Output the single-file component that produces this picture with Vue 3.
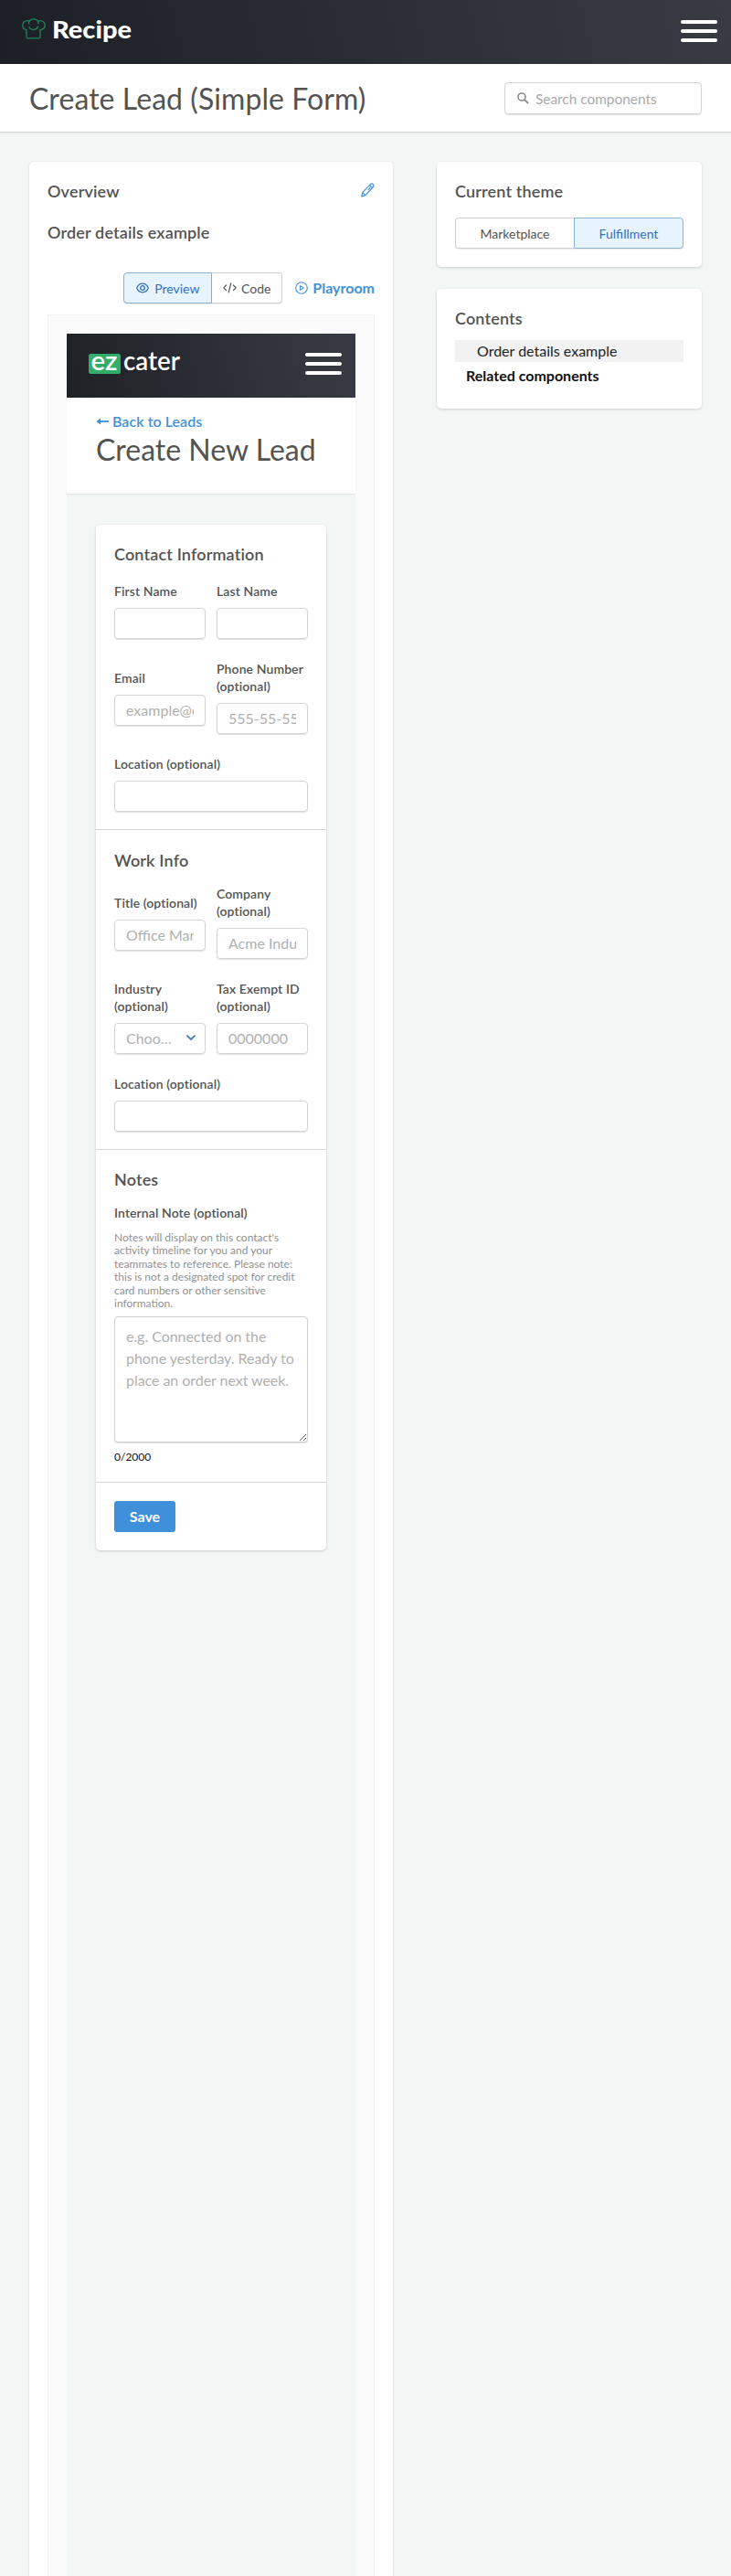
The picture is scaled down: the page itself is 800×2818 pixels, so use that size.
<script setup>
const contact = [
  { label: 'First Name' },
  { label: 'Last Name' },
  { label: 'Email', placeholder: 'example@ezcater.com' },
  { label: 'Phone Number (optional)', placeholder: '555-55-5555' },
  { label: 'Location (optional)', wide: true },
]
const work = [
  { label: 'Title (optional)', placeholder: 'Office Manager' },
  { label: 'Company (optional)', placeholder: 'Acme Industries' },
  { label: 'Industry (optional)', select: 'Choose one' },
  { label: 'Tax Exempt ID (optional)', placeholder: '0000000' },
  { label: 'Location (optional)', wide: true },
]
const groups = [
  { title: 'Contact Information', cls: 'contact', fields: contact },
  { title: 'Work Info', cls: 'work', fields: work },
]
</script>

<template>
  <div class="page">
    <header class="topbar">
      <div class="brand">
        <svg class="hat" width="26" height="23" viewBox="0 0 26 23" fill="none" stroke="#23835c" stroke-width="1.3" stroke-linecap="round" stroke-linejoin="round">
          <path d="M5 13.2V20.6Q5 21.8 6.2 21.8H18.8Q20 21.8 20 20.6V13.2" />
          <path d="M5 12.6C2.5 12.2.8 10.2.8 7.5C.8 4.6 3 2.6 5.7 2.6C6.6 2.6 7.4 2.8 8.1 3.2C9 1.6 10.6.8 12.8.8C15 .8 16.7 1.7 17.6 3.2C18.3 2.8 19.1 2.6 20 2.6C22.8 2.6 25.1 4.6 25.1 7.5C25.1 10.2 22.9 12.3 20 12.6" />
          <path d="M8.1 3.2Q7.5 4.2 7.5 5.8M17.6 3.2Q18.3 4.5 18 5.8M8 9.5Q9 12 10.7 11.9Q12.2 13 13.8 12Q17 11.8 17.6 8.8" />
        </svg>
        <svg class="word" width="92" height="34"><text x="0" y="25" textLength="87" lengthAdjust="spacingAndGlyphs">Recipe</text></svg>
      </div>
      <div class="burger"><i /><i /><i /></div>
    </header>

    <div class="titlebar">
      <h1>Create Lead (Simple Form)</h1>
      <div class="search">
        <svg width="13" height="13" viewBox="0 0 13 13" fill="none" stroke="#8b8b8b" stroke-width="1.6"><circle cx="5" cy="5" r="4" /><path d="M8 8l4 4" stroke-width="2" /></svg>
        <span>Search components</span>
      </div>
    </div>

    <main class="columns">
      <section class="card main">
        <div class="row">
          <h2>Overview</h2>
          <svg class="pencil" width="15" height="16" viewBox="0 0 15 16" fill="none" stroke="#4291d7" stroke-width="1.2" stroke-linejoin="round"><path d="M.8 15l.9-4.3L10.4 1.6Q11.9.3 13.3 1.6Q14.6 3 13.4 4.5L4.9 13.6zM9.6 2.5l2.9 2.9M1.8 10.8l3 2.8M7.8 7.8l2.6-2.7" /></svg>
        </div>
        <h2 class="second">Order details example</h2>
        <div class="tools">
          <div class="toggle">
            <div class="opt on preview">
              <svg width="14" height="12" viewBox="0 0 14 12" fill="none" stroke="#2e70c4" stroke-width="1.3"><path d="M.7 6C2 3 4.2 1.2 7 1.2S12 3 13.3 6C12 9 9.8 10.8 7 10.8S2 9 .7 6z" /><circle cx="7" cy="6" r="2.3" /></svg>
              <span>Preview</span>
            </div>
            <div class="opt code">
              <svg width="15" height="12" viewBox="0 0 15 12" fill="none" stroke="#555" stroke-width="1.2" stroke-linecap="round" stroke-linejoin="round"><path d="M3.6 3L.8 5.8l2.8 2.8M11.4 3l2.8 2.8-2.8 2.8M8.8.8L6.2 11" /></svg>
              <span>Code</span>
            </div>
          </div>
          <a class="play">
            <svg width="14" height="14" viewBox="0 0 14 14" fill="none" stroke="#4291d7" stroke-width="1.1" stroke-linejoin="round"><circle cx="7" cy="7" r="6.3" /><path d="M5.4 4.6v4.8L9.4 7z" /></svg>
            <span>Playroom</span>
          </a>
        </div>

        <div class="frame">
          <div class="canvas">
            <div class="innerbar">
              <svg class="ez" width="104" height="30" viewBox="0 0 104 30">
                <rect x="1" y="4" width="35" height="22" rx="2.5" fill="#34ad6b" />
                <text x="3.4" y="22.3" textLength="29" lengthAdjust="spacingAndGlyphs" class="ezt">ez</text>
                <text x="39" y="22.3" textLength="62" lengthAdjust="spacingAndGlyphs" class="ezt">cater</text>
              </svg>
              <div class="burger"><i /><i /><i /></div>
            </div>
            <div class="innerhead">
              <a class="back">
                <svg width="15" height="10" viewBox="0 0 15 10"><path d="M3 5h11" stroke="#4291d7" stroke-width="1.8" /><path d="M.3 5L5 1.6v6.8z" fill="#4291d7" /></svg>
                <span>Back to Leads</span>
              </a>
              <h1>Create New Lead</h1>
            </div>
            <div class="form">
              <section v-for="g in groups" :key="g.title" class="group" :class="g.cls">
                <h2>{{ g.title }}</h2>
                <div class="fields">
                  <div v-for="f in g.fields" :key="f.label" class="field" :class="{ wide: f.wide }">
                    <label>{{ f.label }}</label>
                    <div v-if="f.select" class="input select">
                      <span>{{ f.select }}</span>
                      <svg width="10" height="7" viewBox="0 0 10 7" fill="none" stroke="#3d80bd" stroke-width="1.9" stroke-linecap="round" stroke-linejoin="round"><path d="M1 1.2l4 4 4-4" /></svg>
                    </div>
                    <div v-else class="input"><span>{{ f.placeholder }}</span></div>
                  </div>
                </div>
              </section>
              <section class="group notes">
                <h2>Notes</h2>
                <label>Internal Note (optional)</label>
                <p class="help">Notes will display on this contact's activity timeline for you and your teammates to reference. Please note: this is not a designated spot for credit card numbers or other sensitive information.</p>
                <textarea placeholder="e.g. Connected on the phone yesterday. Ready to place an order next week."></textarea>
                <div class="count">0/2000</div>
              </section>
              <section class="group actions"><button>Save</button></section>
            </div>
          </div>
        </div>
      </section>

      <aside>
        <section class="card theme">
          <h2>Current theme</h2>
          <div class="toggle">
            <div class="opt market">Marketplace</div>
            <div class="opt on fulfil">Fulfillment</div>
          </div>
        </section>
        <section class="card contents">
          <h2>Contents</h2>
          <div class="current">Order details example</div>
          <div class="related">Related components</div>
        </section>
      </aside>
    </main>
  </div>
</template>

<style>
body { background: #f1f7f6; }
</style>

<style scoped>
* { box-sizing: border-box; }
.page { font-family: Lato, sans-serif; color: #535353; height: 2818px; overflow: hidden; display: flex; flex-direction: column; background: #f2f7f6; font-size: 16px; }
h1, h2, p { margin: 0; }
h1 { font-weight: 400; font-size: 32px; line-height: 40px; white-space: nowrap; letter-spacing: .07px; }
h2 { font-weight: 600; font-size: 18px; line-height: 24px; letter-spacing: .16px; }
.topbar { flex: none; height: 70px; display: flex; align-items: center; justify-content: space-between; padding: 0 15px 3px 24px; background: linear-gradient(76deg, #1c2026, #383b44); }
.brand { display: flex; align-items: center; }
.hat { margin-top: -5px; }
.word { margin-left: 7px; overflow: visible; }
.word text { font: 900 27px Lato, sans-serif; fill: #fff; }
.burger { display: flex; flex-direction: column; gap: 6px; width: 40px; }
.burger i { height: 4px; border-radius: 2px; background: #fff; }
.titlebar { flex: none; height: 75px; background: #fff; border-bottom: 1px solid #ccd3d2; box-shadow: 0 1px 4px rgba(0,0,0,.04); display: flex; justify-content: space-between; align-items: center; padding: 1px 32px 0; }
.search { width: 216px; height: 35px; border: 1px solid #d3d3d3; border-radius: 4px; box-shadow: 0 1px 1px rgba(0,0,0,.12); display: flex; align-items: center; padding-left: 13px; gap: 7px; color: #aaa; font-size: 15.4px; }
.columns { flex: 1; min-height: 0; display: flex; justify-content: space-between; align-items: stretch; padding: 32px 32px 0; }
.card { background: #fff; border-radius: 5px; box-shadow: 0 1px 3px rgba(0,0,0,.16); padding: 20px; }
.main { width: 398px; padding-bottom: 0; border-radius: 5px 5px 0 0; display: flex; flex-direction: column; }
.row { display: flex; justify-content: space-between; }
.pencil { margin-top: 3px; }
.second { margin-top: 21px; }
.tools { display: flex; justify-content: flex-end; align-items: center; gap: 14px; margin-top: 32px; height: 34px; }
.toggle { display: flex; height: 34px; font-size: 14px; }
.opt { display: flex; align-items: center; justify-content: center; gap: 6px; border: 1px solid #cfcfcf; box-shadow: 0 1px 1px rgba(0,0,0,.08); }
.opt:first-child { border-radius: 4px 0 0 4px; border-right: 0; }
.opt:last-child { border-radius: 0 4px 4px 0; border-left: 0; }
.opt.on { background: #e8f4fd; border: 1px solid #88b2d8; color: #2e70c4; }
.preview { width: 97px; }
.code { width: 77px; gap: 5px; }
.play { display: flex; align-items: center; gap: 5px; color: #4291d7; font-weight: 700; font-size: 16px; margin-top: -1px; }
.frame { flex: 1; margin-top: 12px; padding: 20px 20px 0; border: 1px solid #f2f2f2; border-bottom: 0; background: #fafafa; display: flex; }
.canvas { flex: 1; min-width: 0; background: #f2f7f6; }
.innerbar { height: 70px; display: flex; align-items: center; justify-content: space-between; padding: 0 15px 4px 23px; background: linear-gradient(76deg, #1e2227, #383b43); }
.ezt { font: 600 28px Lato, sans-serif; fill: #fff; }
.innerhead { height: 106px; background: #fff; border-bottom: 1px solid #e2e6e5; box-shadow: 0 1px 3px rgba(0,0,0,.04); padding: 14px 32px 0; }
.back { display: flex; align-items: center; gap: 3px; color: #4291d7; font-weight: 600; font-size: 16px; line-height: 24px; letter-spacing: .05px; }
.innerhead h1 { margin-top: -1px; letter-spacing: 0; }
.form { margin: 33px 32px 0; border-radius: 5px; background: #fff; box-shadow: 0 1px 3px rgba(0,0,0,.18); }
.group { padding: 20px; border-top: 1px solid #d5d5d5; }
.contact { border-top: 0; height: 333px; }
.work { height: 350px; padding-top: 21px; }
.notes { height: 364px; }
.actions { height: 75px; }
.fields { display: grid; grid-template-columns: 100px 100px; column-gap: 12px; row-gap: 24px; align-items: center; margin-top: 20px; }
.work .fields { margin-top: 16px; }
.wide { grid-column: span 2; }
label { display: block; font-size: 14px; font-weight: 600; line-height: 19px; letter-spacing: .1px; }
.field label { margin-top: -1px; }
.field { padding-top: 1px; margin-top: -1px; }
.input { margin-top: 9px; height: 34px; border: 1px solid #d4d4d4; border-radius: 4px; box-shadow: 0 1px 1px rgba(0,0,0,.12); padding: 0 12px 1px; display: flex; align-items: center; color: #b0b0b0; font-size: 16px; }
.input span { flex: 1; overflow: hidden; white-space: nowrap; }
.select span { text-overflow: ellipsis; margin-right: 14px; }
.select { padding-right: 10px; }
.notes label { margin-top: 15px; }
.help { margin-top: 11px; font-size: 12px; line-height: 14.4px; color: #919191; }
textarea { display: block; width: 212px; height: 138px; margin: 7px 0 0; border: 1px solid #d0d0d0; border-radius: 4px; box-shadow: 0 1px 1px rgba(0,0,0,.12); padding: 9px 12px; font: 16px/24px Lato, sans-serif; letter-spacing: -.05px; resize: vertical; }
textarea::placeholder { color: #b0b0b0; }
.count { margin-top: 7px; font-size: 12px; line-height: 18px; color: #111; }
button { display: block; width: 67px; height: 34px; border: 0; border-radius: 3px; background: #3f90da; color: #fff; font: 700 16px Lato, sans-serif; padding: 0 0 1px; }
aside { width: 290px; display: flex; flex-direction: column; gap: 24px; }
.theme { height: 115px; }
.theme .toggle { margin-top: 17px; }
.market { width: 130px; }
.fulfil { flex: 1; }
.contents { height: 131px; }
.current { margin-top: 12px; height: 24px; line-height: 24px; background: #f2f2f2; padding-left: 24px; font-size: 16px; color: #222; }
.related { margin-top: 3px; line-height: 24px; padding-left: 12px; font-weight: 700; font-size: 16px; color: #111; }
</style>
